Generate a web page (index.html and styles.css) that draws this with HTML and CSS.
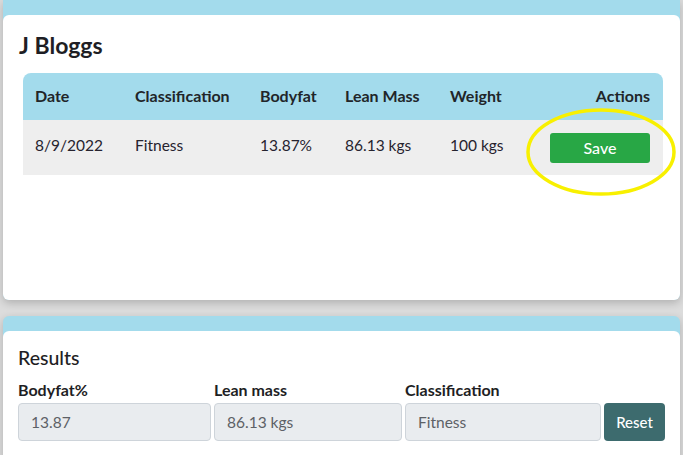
FILE: index.html
```html
<!DOCTYPE html>
<html>
<head>
<meta charset="utf-8">
<link rel="stylesheet" href="styles.css">
</head>
<body>
<div class="page">
  <section class="card card-first">
    <div class="card-body body-first">
      <h2 class="title">J Bloggs</h2>
      <div class="table">
        <div class="thead">
          <div>Date</div>
          <div>Classification</div>
          <div>Bodyfat</div>
          <div>Lean Mass</div>
          <div>Weight</div>
          <div class="right">Actions</div>
        </div>
        <div class="trow">
          <div class="cell">8/9/2022</div>
          <div class="cell">Fitness</div>
          <div class="cell">13.87%</div>
          <div class="cell">86.13 kgs</div>
          <div class="cell">100 kgs</div>
          <div class="right"><button class="btn-save">Save</button></div>
        </div>
      </div>
    </div>
  </section>
  <section class="card">
    <div class="card-body body-results">
      <h3 class="results-title">Results</h3>
      <div class="results-grid">
        <label class="lbl">Bodyfat%</label>
        <label class="lbl">Lean mass</label>
        <label class="lbl">Classification</label>
        <span></span>
        <div class="field">13.87</div>
        <div class="field">86.13 kgs</div>
        <div class="field">Fitness</div>
        <button class="btn-reset">Reset</button>
      </div>
    </div>
  </section>
  <svg class="highlight" width="156" height="92" viewBox="0 0 156 92">
    <ellipse cx="78" cy="45" rx="73" ry="42" fill="none" stroke="#f8f000" stroke-width="3.5"/>
  </svg>
</div>
</body>
</html>
```
FILE: styles.css
```css
html, body {
  margin: 0;
  padding: 0;
}
body {
  background: #dcdcdc;
  font-family: "Lato", "Liberation Sans", sans-serif;
  color: #212529;
}
.page {
  position: relative;
  padding: 0 3px;
  display: flex;
  flex-direction: column;
  gap: 16px;
  height: 455px;
  overflow: hidden;
}
.card {
  background: #a3dbec;
  border-radius: 6px;
  padding-top: 15px;
  box-shadow: 0 3px 9px rgba(0, 0, 0, 0.2);
  flex: none;
}
.card-first {
  border-radius: 0 0 6px 6px;
}
.card-body {
  background: #fff;
  border-radius: 6px;
}
.body-first {
  height: 285px;
  box-sizing: border-box;
  padding: 17px 17px 0 20px;
}
.title {
  margin: 0 0 15px -4px;
  font-size: 23px;
  line-height: 26px;
  font-weight: 700;
  color: #1e1e24;
}
.table {
  font-size: 15px;
}
.thead, .trow {
  display: grid;
  grid-template-columns: 100px 125px 85px 105px 1fr 113px;
  align-items: center;
}
.thead > div, .trow > div {
  padding-left: 12px;
}
.thead > div.right, .trow > div.right {
  padding-left: 0;
  padding-right: 13px;
  text-align: right;
}
.thead {
  background: #a3dbec;
  border-radius: 8px 8px 0 0;
  height: 47px;
  font-size: 16px;
  font-weight: 700;
  padding-bottom: 3px;
  box-sizing: border-box;
}
.trow {
  background: #eeeeee;
  height: 55px;
  color: #26232e;
  font-size: 15.5px;
}
.trow > .cell {
  margin-bottom: 5px;
}
.btn-save {
  width: 100px;
  height: 30px;
  border: none;
  border-radius: 3px;
  background: #28a745;
  color: #fff;
  font-family: inherit;
  font-size: 16px;
  font-weight: 500;
  padding: 0;
  margin-top: 0;
}
.body-results {
  padding: 15px 15px 20px 15px;
}
.results-title {
  margin: 0 0 12px 0;
  font-size: 19.5px;
  line-height: 23px;
  font-weight: 500;
  color: #1e1e24;
}
.results-grid {
  display: grid;
  grid-template-columns: 193px 188px 196px 61px;
  column-gap: 3px;
  row-gap: 4px;
  align-items: end;
}
.lbl {
  font-size: 16px;
  font-weight: 700;
  line-height: 18px;
  color: #1e1e24;
}
.field {
  height: 38px;
  box-sizing: border-box;
  background: #e9ecef;
  border: 1px solid #ced4da;
  border-radius: 4px;
  padding-left: 12px;
  display: flex;
  align-items: center;
  font-size: 15.5px;
  color: #5d6166;
}
.btn-reset {
  height: 38px;
  border: none;
  border-radius: 4px;
  background: #3d6b6e;
  color: #fff;
  font-family: inherit;
  font-size: 15px;
  font-weight: 500;
  padding: 0;
}
.highlight {
  position: absolute;
  left: 523px;
  top: 107px;
}
```
